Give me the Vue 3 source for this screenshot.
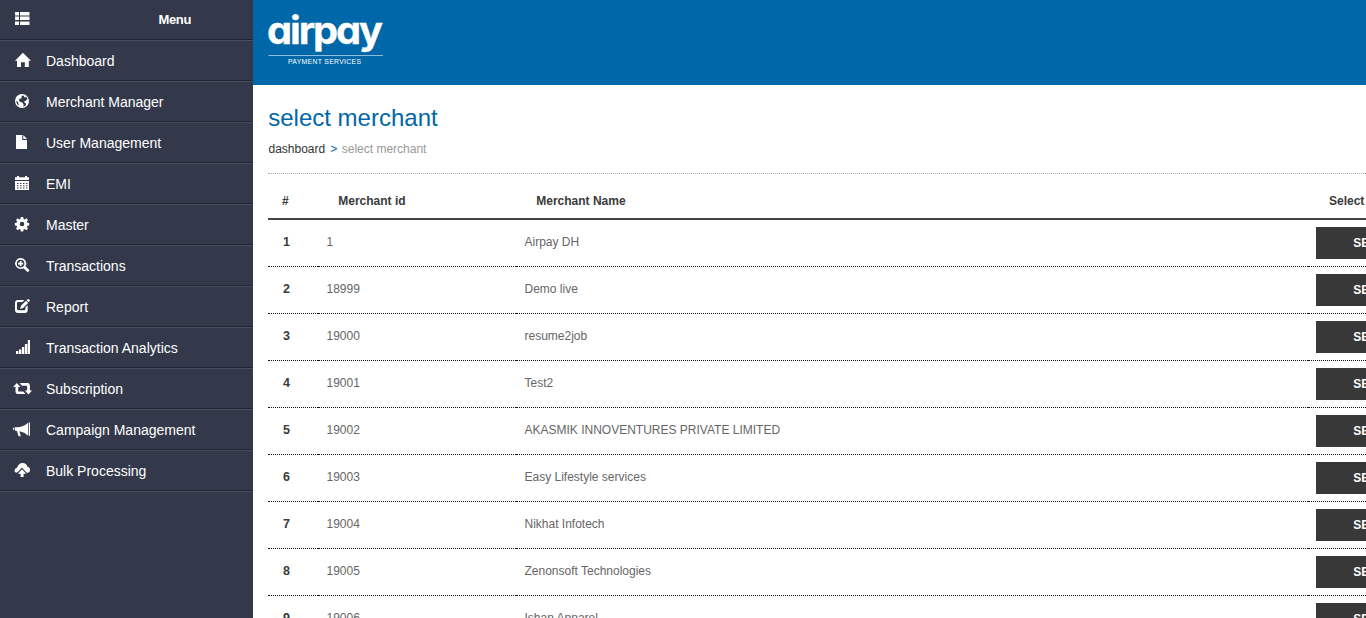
<script setup>
const menu = [
  { label: 'Dashboard', icon: 'home' },
  { label: 'Merchant Manager', icon: 'globe' },
  { label: 'User Management', icon: 'file' },
  { label: 'EMI', icon: 'calendar' },
  { label: 'Master', icon: 'cog' },
  { label: 'Transactions', icon: 'zoom' },
  { label: 'Report', icon: 'edit' },
  { label: 'Transaction Analytics', icon: 'signal' },
  { label: 'Subscription', icon: 'retweet' },
  { label: 'Campaign Management', icon: 'bullhorn' },
  { label: 'Bulk Processing', icon: 'cloud' },
]

// Filled icon shapes on a 20 x 16 grid
const icons = {
  list: 'M2 1h4v3.5H2zM7 1h9.5v3.5H7zM2 5.6h4V9H2zM7 5.6h9.5V9H7zM2 10.4h4V14H2zM7 10.4h9.5V14H7z',
  home: 'M9.9 .8 18 8.7h-2.2V15h-4V10.300H8V15H4V8.700H1.900z',
  globe: 'M9 1a7 7 0 1 0 0 14A7 7 0 0 0 9 1zM9.800 2.400l1.400.5-.3 1.200 1.300.3.8-.8 1.700 2.300-.9.4-.8 1.600-1.700.2.300 1.600 1.400.8-.2 1.800-2.300 1.500.1-2.200-1.300-2-1.900-.6-1.400-1.500.3-1.700 1.900-.4.600-1.300-.4-.8zM3.300 7.500l1.800 1.800.3 2 1 1.700Q3.300 11.500 3.300 7.500z',
  file: 'M3 1h6.300v5H14v9H3zM10.300 1 14 5H10.300z',
  calendar: 'M2 2.200h2V1h2v1.200h6V1h2v1.200h2V5H2zM2 6h14v9H2zM4 8v1h1.500V8zM7 8v1h1.500V8zM10 8v1h1.500V8zM13 8v1h1.500V8zM4 10.300v1h1.500v-1zM7 10.300v1h1.500v-1zM10 10.300v1h1.500v-1zM13 10.300v1h1.500v-1zM4 12.600v1h1.500v-1zM7 12.600v1h1.500v-1zM10 12.600v1h1.500v-1zM13 12.600v1h1.500v-1z',
  cog: 'M7.800 1h2.400l.4 1.900 1.100.5 1.700-1.100 1.600 1.700-1.100 1.600.5 1.200 1.800.3v2.300l-1.800.4-.5 1.100 1.100 1.700-1.600 1.600-1.700-1.100-1.100.5-.4 1.900H7.800l-.4-1.900-1.100-.5-1.700 1.100L3 12.600l1.100-1.700-.5-1.100L1.800 9.400V7.100l1.800-.3.5-1.200L3 4l1.600-1.700 1.700 1.100 1.100-.5zM9 5.700a2.300 2.300 0 1 0 0 4.600 2.300 2.300 0 0 0 0-4.600z',
  zoom: 'M7.600 1a5.500 5.500 0 1 0 2.900 10.200l4.200 4 1.900-1.900-4.100-4A5.500 5.500 0 0 0 7.600 1zM7.600 2.800a3.800 3.800 0 1 1 0 7.600 3.800 3.800 0 0 1 0-7.600zM6.700 4.100h1.800v1.600h1.700v1.800H8.500v1.600H6.700V7.500H5V5.700h1.700z',
  edit: 'M5 2h6.300L9.500 4H5.400Q4 4 4 5.400v5.200Q4 12.200 5.400 12.200h5.800q1.300 0 1.300-1.400V9.300l2.200-2v4.500q0 3.200-3 3.200H5q-3 0-3-3V5q0-3 3-3zM7 11l1-3.200 5-5 2.100 2.100-5 5zM13.600 2.200l1-1q.6-.5 1.200 0l.8.8q.6.6 0 1.200l-1 1z',
  signal: 'M3 12h2.300v3H3zM5.900 10.400h2.400V15H5.900zM8.900 7.900h2.400V15H8.900zM11.900 5h2.400v10h-2.400zM14.800 1H17v14h-2.200z',
  retweet: 'M3.800 3 7.400 7H5.200v4.500h5l2.400 2.600H4.900Q2.500 14.100 2.500 11.800V7H.2zM6.600 3H14.500Q16.900 3 16.900 5.400V10.500h2.200l-3.600 4-3.700-4h2.300V5.700H9z',
  bullhorn: 'M0 6.700h1.200v2H0zM1.800 6.200Q10 6.800 15 1.800V14.500Q11.500 11 6.500 10.200l1.300 5H5.600L3.900 9.900 1.800 9.600zM15.700 1.500h1.300v13.300h-1.300z',
  cloud: 'M1.500 9q0-2.700 2.500-3.200Q5.500 1 9.700 1q3.800 0 4.600 3.700 2.700.4 2.700 3.100Q17 10.700 14.400 10.700h-.8L9 5.600l-4.700 5Q1.500 10.800 1.500 9zM9 7.300l4.200 4.500h-2.600V15H7.600v-3.200H4.900z',
}

const merchants = [
  ['1', 'Airpay DH'],
  ['18999', 'Demo live'],
  ['19000', 'resume2job'],
  ['19001', 'Test2'],
  ['19002', 'AKASMIK INNOVENTURES PRIVATE LIMITED'],
  ['19003', 'Easy Lifestyle services'],
  ['19004', 'Nikhat Infotech'],
  ['19005', 'Zenonsoft Technologies'],
  ['19006', 'Ishan Apparel'],
]
</script>

<template>
  <div class="page">
    <aside class="sidebar">
      <div class="item head">
        <svg class="icon" viewBox="0 0 20 16"><path fill-rule="evenodd" :d="icons.list" /></svg>
        <span class="menu-title">Menu</span>
      </div>
      <div v-for="m in menu" :key="m.label" class="item">
        <svg class="icon" viewBox="0 0 20 16"><path fill-rule="evenodd" :d="icons[m.icon]" /></svg>
        <span>{{ m.label }}</span>
      </div>
    </aside>
    <main class="main">
      <header class="banner">
        <svg class="logo" viewBox="0 0 120 60">
          <text class="brand" x="-1" y="34" textLength="114" lengthAdjust="spacingAndGlyphs">airpay</text>
          <path class="rule" d="M.5 45.500H115" />
          <text class="tagline" x="20" y="54" textLength="73" lengthAdjust="spacing">PAYMENT SERVICES</text>
        </svg>
      </header>
      <section class="content">
        <h1>select merchant</h1>
        <nav class="crumbs"><span>dashboard</span><b>&gt;</b><i>select merchant</i></nav>
        <div class="table">
          <div class="row header">
            <div>#</div>
            <div>Merchant id</div>
            <div>Merchant Name</div>
            <div>Select</div>
          </div>
          <div v-for="(m, i) in merchants" :key="m[0]" class="row">
            <div class="num">{{ i + 1 }}</div>
            <div>{{ m[0] }}</div>
            <div>{{ m[1] }}</div>
            <div class="action"><button class="btn">SELECT</button></div>
          </div>
        </div>
      </section>
    </main>
  </div>
</template>

<style>
body { margin: 0; overflow: hidden; }
</style>

<style scoped>
.page {
  display: flex;
  width: 1366px;
  height: 618px;
  overflow: hidden;
  background: #fff;
  font-family: "Liberation Sans", Arial, sans-serif;
}
.sidebar {
  flex: none;
  width: 253px;
  background: #33384b;
  color: #fff;
  font-size: 14px;
}
.item {
  box-sizing: border-box;
  height: 41px;
  display: flex;
  align-items: center;
  gap: 13px;
  padding-left: 13px;
  border-top: 1px solid #494e5f;
  border-bottom: 1px solid #222533;
}
.item:last-child { box-shadow: 0 1px #494e5f; }
.head { height: 40px; border-top: 0; }
.icon { width: 20px; height: 16px; margin-bottom: 1px; fill: #fff; overflow: visible; }
.menu-title { margin-left: 112.5px; font-size: 13px; font-weight: bold; letter-spacing: -0.35px; }
.main { flex: 1; min-width: 0; overflow: hidden; }
.banner { height: 85px; box-sizing: border-box; padding: 10px 15px; background: #0067a9; }
.logo { display: block; width: 120px; height: 60px; overflow: visible; fill: #fff; }
.brand {
  font-family: Inter, sans-serif;
  font-size: 38px;
  font-weight: 700;
  font-feature-settings: "cv11" 1;
  letter-spacing: -2px;
  stroke: #fff;
  stroke-width: 0.3;
}
.rule { stroke: #8fbddb; stroke-width: 1; }
.tagline { font-family: "Liberation Sans", sans-serif; font-size: 6.800px; }
.content { padding-left: 15px; }
h1 { margin: 19px 0 0; padding-left: 0.25px; font-size: 24px; line-height: 28px; font-weight: normal; color: #0067a9; }
.crumbs { display: flex; height: 41px; padding-left: 0.5px; line-height: 34px; font-size: 12px; color: #333; }
.crumbs b { margin: 0 4.5px 0 5px; font-weight: normal; color: #0067a9; }
.crumbs i { font-style: normal; color: #999; }
.table { border-top: 1px dotted #aaa; color: #666; font-size: 12px; }
.row { display: grid; grid-template-columns: 50px 198px 792px 198px; height: 47px; }
.row > div { box-sizing: border-box; padding: 7px 8px 0 8.5px; border-bottom: 1px dotted #111; line-height: 30px; }
.row > .action { padding-left: 8px; }
.row.header { height: 46px; }
.row.header > div {
  padding: 11px 20px 0 20.25px;
  border-bottom: 2px solid #444;
  font-weight: bold;
  line-height: 32px;
  color: #3a3a3a;
}
.row.header > div:first-child { padding-left: 14px; }
.row.header > div:last-child { padding-left: 21px; }
.row > .num { padding: 7px 0 0 15px; font-size: 12.5px; font-weight: bold; line-height: 31px; color: #3a3a3a; }
.btn {
  display: block;
  width: 122px;
  height: 32px;
  padding: 0;
  border: 0;
  background: #383838;
  color: #fff;
  font: bold 12px/32px "Liberation Sans", Arial, sans-serif;
}
</style>
